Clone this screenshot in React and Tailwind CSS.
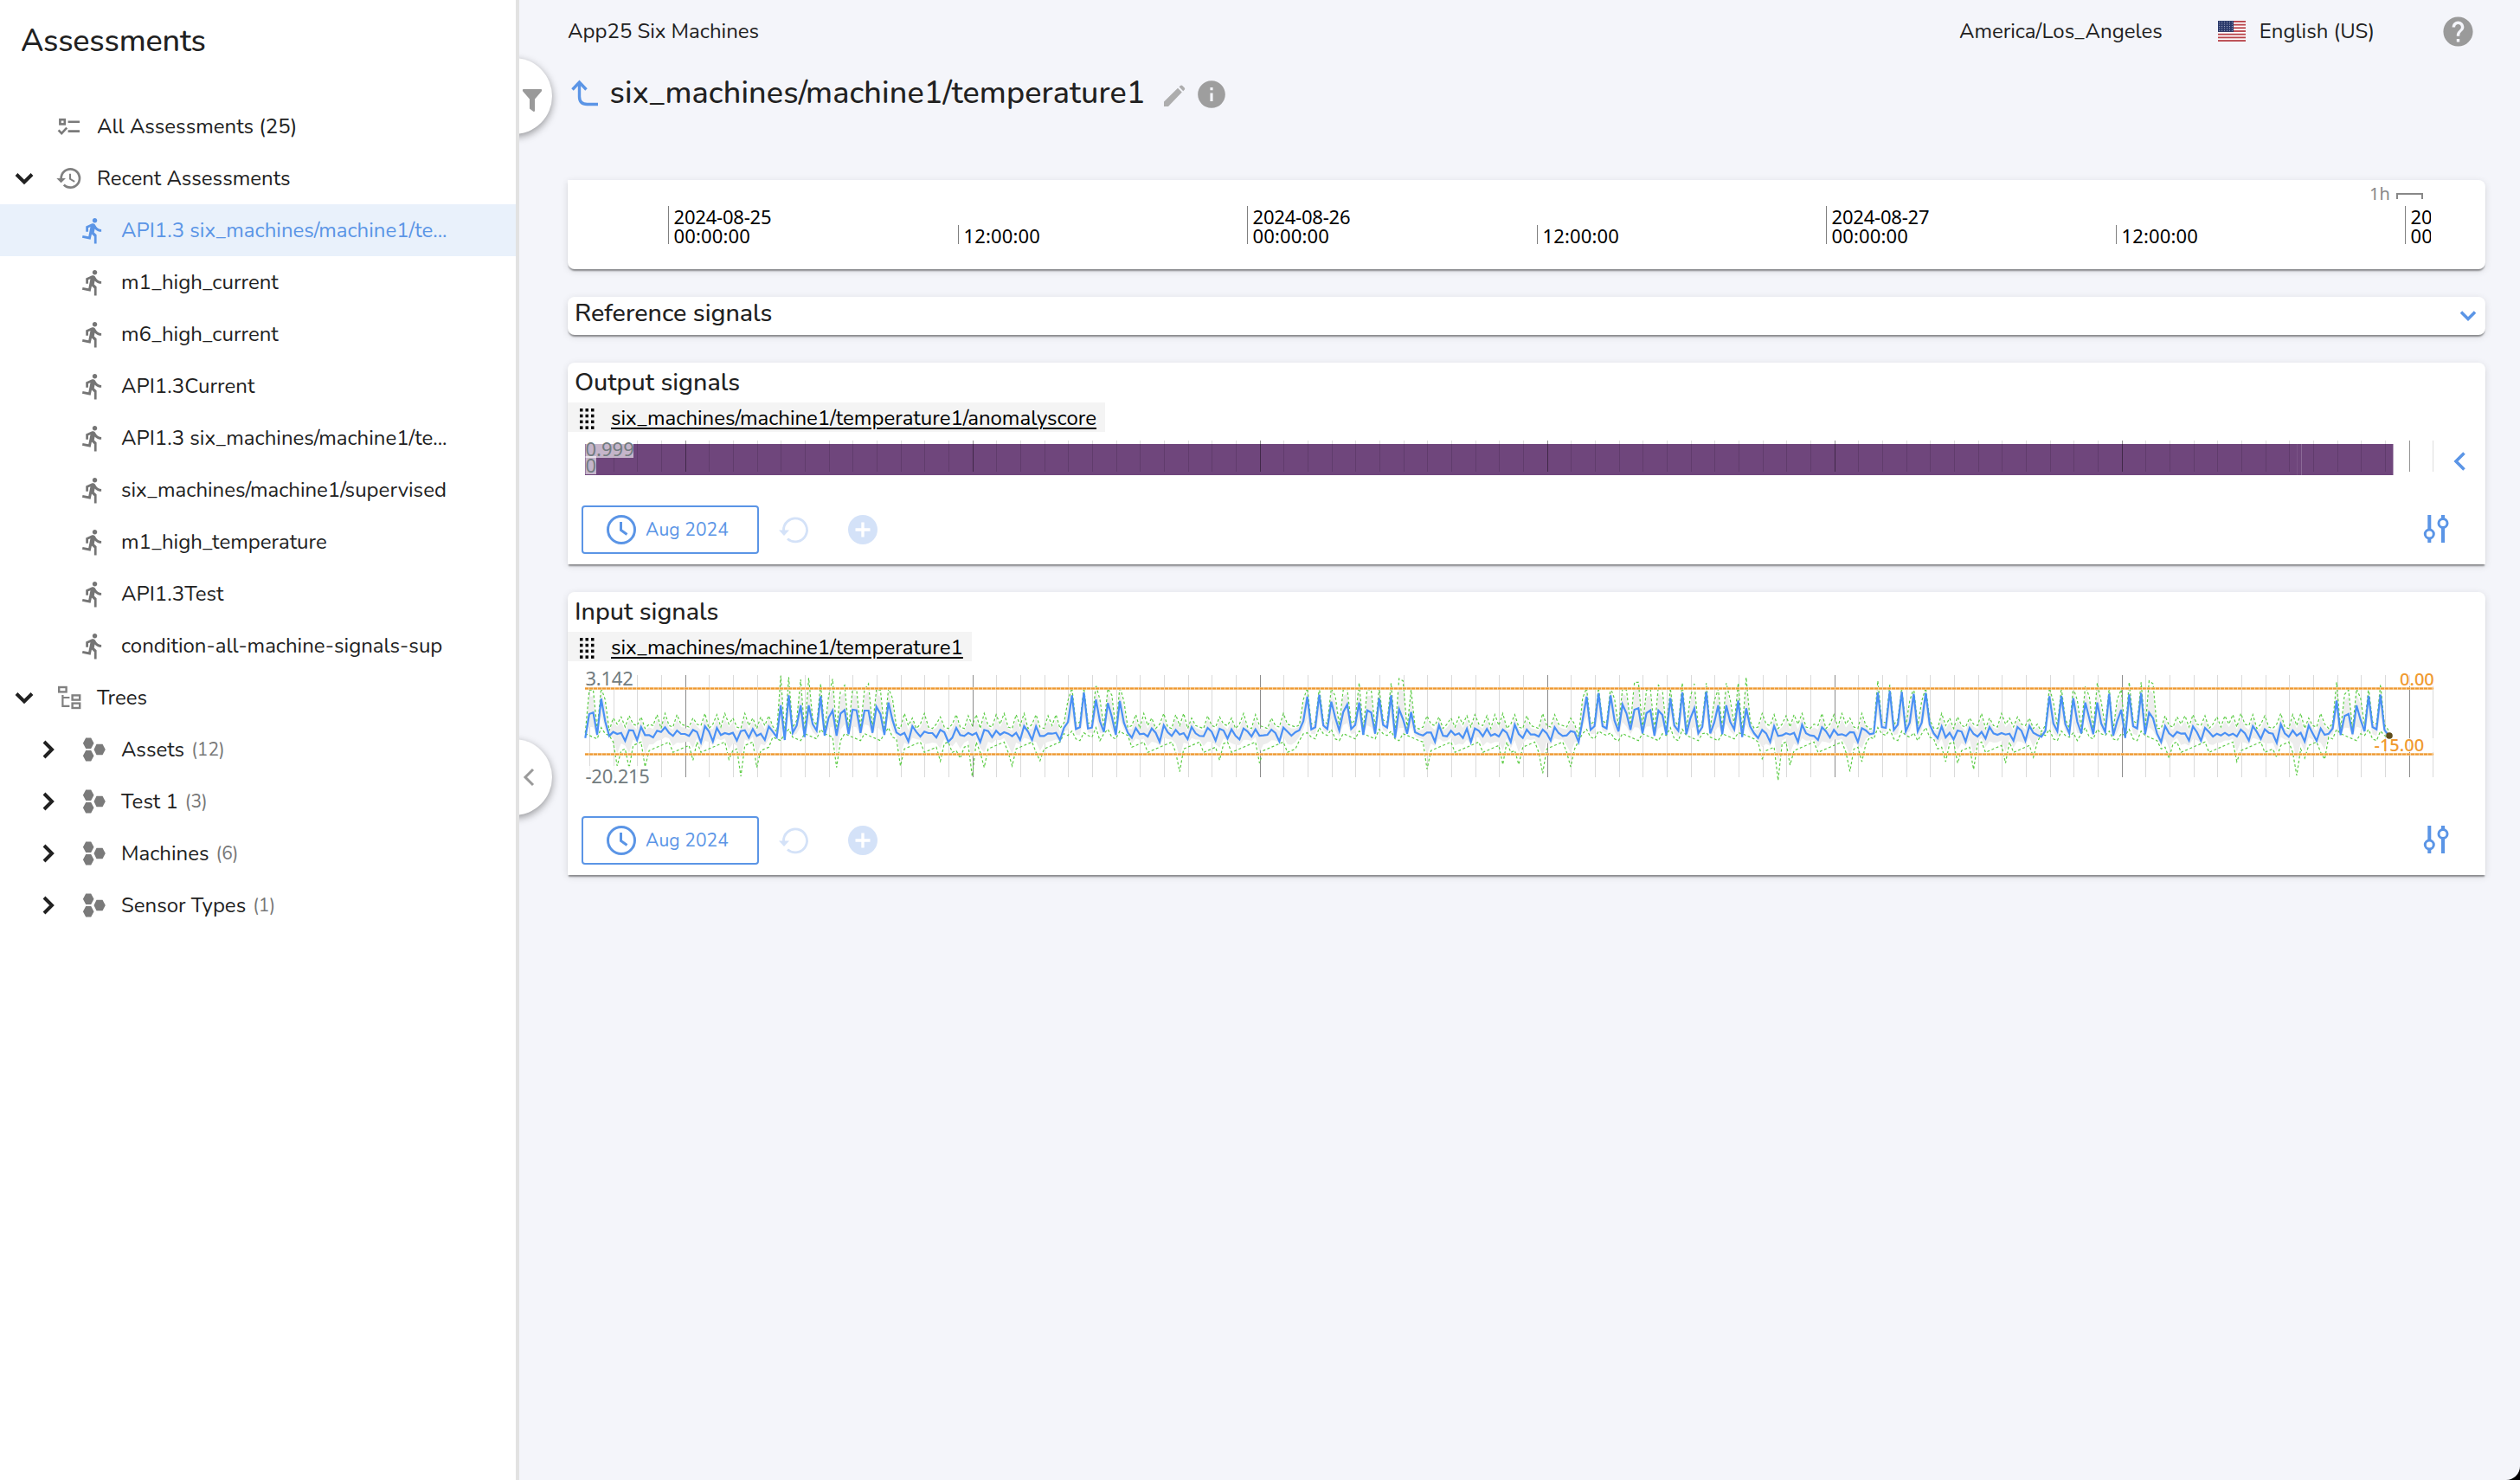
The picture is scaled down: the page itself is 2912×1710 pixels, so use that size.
import { MdDirectionsRun, MdHelp, MdHistory, MdInfo } from 'react-icons/md'

const RECENT = [
  'API1.3 six_machines/machine1/te...',
  'm1_high_current',
  'm6_high_current',
  'API1.3Current',
  'API1.3 six_machines/machine1/te...',
  'six_machines/machine1/supervised',
  'm1_high_temperature',
  'API1.3Test',
  'condition-all-machine-signals-sup',
]

const TREES = [
  { name: 'Assets', count: 12 },
  { name: 'Test 1', count: 3 },
  { name: 'Machines', count: 6 },
  { name: 'Sensor Types', count: 1 },
]

// temperature samples, one per 10 minutes, in thirds of a pixel below y = 770
const SIGNAL = [
  248, 165, 160, 237, 112, 190, 241, 227, 234, 230, 258, 221, 222, 255, 210, 238, 238, 246, 223, 227,
  211, 230, 241, 222, 234, 234, 241, 220, 227, 263, 207, 225, 260, 213, 238, 231, 235, 230, 257, 224,
  221, 247, 217, 241, 233, 255, 208, 226, 245, 135, 255, 100, 230, 205, 135, 245, 135, 200, 223, 103,
  240, 178, 153, 240, 163, 151, 235, 150, 152, 230, 153, 153, 230, 140, 165, 237, 125, 185, 229, 238,
  230, 260, 207, 227, 243, 226, 231, 231, 246, 220, 228, 261, 247, 213, 238, 241, 230, 238, 230, 262,
  220, 224, 245, 223, 237, 228, 233, 242, 230, 255, 207, 226, 255, 208, 241, 241, 232, 233, 230, 255,
  213, 193, 100, 217, 211, 90, 215, 212, 115, 190, 227, 127, 175, 237, 120, 195, 230, 247, 214, 235,
  233, 243, 215, 230, 262, 204, 228, 241, 220, 236, 231, 252, 210, 232, 241, 242, 213, 226, 257, 216,
  222, 250, 218, 240, 253, 215, 225, 243, 218, 240, 239, 237, 219, 231, 260, 212, 226, 240, 228, 221,
  190, 105, 218, 211, 98, 205, 217, 122, 178, 222, 158, 132, 217, 203, 125, 237, 152, 160, 233, 110,
  203, 212, 100, 248, 148, 183, 233, 158, 228, 235, 239, 229, 229, 261, 204, 240, 242, 223, 238, 232,
  248, 216, 262, 215, 223, 242, 217, 240, 234, 243, 219, 230, 262, 202, 234, 248, 219, 236, 236, 243,
  219, 232, 257, 211, 231, 241, 239, 224, 228, 262, 185, 105, 220, 207, 93, 207, 215, 100, 188, 225,
  132, 163, 220, 150, 145, 232, 162, 152, 240, 153, 168, 237, 110, 205, 223, 90, 235, 180, 145, 232,
  210, 88, 232, 195, 135, 235, 135, 192, 218, 118, 245, 145, 208, 232, 248, 220, 232, 262, 207, 241,
  239, 232, 236, 230, 262, 202, 232, 239, 241, 255, 211, 225, 246, 220, 237, 235, 241, 228, 229, 262,
  214, 222, 235, 232, 90, 210, 213, 85, 220, 202, 88, 225, 195, 95, 225, 195, 92, 202, 232, 249,
  208, 246, 230, 253, 222, 226, 260, 213, 234, 243, 227, 250, 210, 232, 237, 231, 236, 233, 257, 210,
  223, 257, 206, 230, 238, 244, 223, 103, 198, 225, 102, 200, 232, 110, 192, 232, 125, 180, 235, 125,
  198, 227, 95, 240, 190, 150, 248, 97, 207, 215, 92, 235, 160, 180, 233, 262, 207, 232, 243, 227,
  233, 232, 257, 208, 228, 258, 213, 227, 243, 233, 239, 230, 239, 233, 243, 219, 232, 257, 207, 227,
  251, 218, 230, 233, 265, 200, 232, 244, 222, 240, 230, 260, 205, 232, 258, 215, 237, 233, 215, 118,
  238, 172, 165, 235, 135, 185, 225, 102, 210, 218, 98, 220, 239,
]

const HIGH_SPIKES = {
  49: 32, 51: 37, 54: 45, 56: 40, 59: 60, 62: 43, 65: 65, 71: 60, 128: 65, 134: 70, 194: 57, 202: 58, 204: 42, 205: 50,
  263: 55, 264: 55, 269: 65, 275: 57, 278: 60, 281: 58, 286: 58, 289: 58, 291: 38, 324: 50, 327: 63, 376: 68, 379: 58,
  387: 55, 390: 55, 392: 50, 393: 60, 439: 55, 450: 63,
}

const LOW_SPIKES = {
  8: 345, 11: 353, 15: 348, 27: 325, 36: 322, 39: 381, 43: 350, 63: 350, 79: 345, 89: 328, 94: 318, 97: 381, 100: 350,
  107: 345, 114: 327, 149: 365, 159: 325, 169: 335, 211: 356, 230: 340, 234: 340, 240: 370, 247: 348, 295: 320, 299: 395,
  302: 342, 317: 364, 320: 330, 341: 330, 344: 335, 348: 357, 356: 335, 363: 315, 397: 318, 414: 330, 424: 315, 429: 378,
  431: 318, 436: 322,
}

const busy = i => [-2, -1, 0, 1, 2].some(d => SIGNAL[i + d] < 180)

const HIGH = SIGNAL.map((v, i) => {
  if (HIGH_SPIKES[i]) return HIGH_SPIKES[i]
  if (v < 172) return 74 + Math.max(0, v - 100) * 0.12
  const prev = SIGNAL[i - 1] ?? v
  const next = SIGNAL[i + 1] ?? v
  if (busy(i)) return v < 200 ? v - 75 : v - 18
  if (v < prev && v <= next) return 163 + ((i * 7) % 5) * 4
  return 200 + ((i * 5) % 4) * 5
})

const LOW = SIGNAL.map((v, i) => {
  if (LOW_SPIKES[i]) return LOW_SPIKES[i]
  if (busy(i)) return v < 130 ? 212 + ((i * 7) % 4) * 6 : 233 + ((i * 11) % 5) * 6
  return 262 + ((i * 13) % 7) * 6
})

const px = i => 676.3 + i * 4.61
const py = v => 770 + v / 3
const line = values => values.map((v, i) => `${px(i).toFixed(1)},${py(v).toFixed(1)}`)
const mix = (values, k) => SIGNAL.map((v, i) => v + (values[i] - v) * k)
const BAND = [...line(mix(HIGH, 0.72)), ...line(mix(LOW, 0.6)).reverse()].join(' ')

const HOURS = Array.from({ length: 78 }, (_, k) => k - 4)

function HourTicks({ y1, y2, minor, major }) {
  return HOURS.map(k => {
    const x = Math.floor(792.2 + k * 27.667) + 0.5
    return <line key={k} x1={x} x2={x} y1={y1} y2={y2} stroke={k % 12 === 0 ? major : minor} strokeWidth="1" />
  })
}

function ChevronIcon({ d, size, className }) {
  return (
    <svg viewBox="0 0 24 24" width={size} height={size} className={className} fill="none" stroke="currentColor">
      <path d={d} strokeWidth="4" />
    </svg>
  )
}

function ChecklistIcon() {
  return (
    <svg viewBox="0 0 28 28" width="28" height="28" fill="none" stroke="#7a7a7a" strokeWidth="2.6">
      <rect x="3.4" y="6.2" width="5.4" height="5.2" />
      <path d="M12.6 8.8H26M12.6 19.6H26M1.6 18.4l3.6 3.8 6-6.6" />
    </svg>
  )
}

function TreeIcon() {
  return (
    <svg viewBox="0 0 28 28" width="28" height="28" fill="none" stroke="#808080" strokeWidth="2.4">
      <rect x="2.2" y="2" width="8.4" height="5.4" />
      <rect x="17.6" y="11.4" width="8.6" height="5.2" />
      <rect x="17.6" y="20.6" width="8.6" height="5.4" />
      <path d="M6.4 11v12.800h8M6.4 14h8" strokeWidth="2.2" />
    </svg>
  )
}

function HexIcon() {
  return (
    <svg viewBox="0 0 28 28" width="28" height="28" fill="#7a7a7a">
      <path d="M4.2 .6h6l3.300 6.200-3.300 6.200h-6l-3.300-6.200zM4.200 15h6l3.300 6.200-3.300 6.200h-6l-3.300-6.200zM16.500 7.800h7l3.300 6.200-3.300 6.200h-7l-3-6.200z" />
    </svg>
  )
}

function Sidebar() {
  return (
    <aside className="w-[600px] shrink-0 bg-white border-r-4 border-[#e2e2e2]">
      <h1 className="h-24 mb-5 pl-6 text-[36px] leading-[96px] font-medium tracking-[-0.2px]">Assessments</h1>
      <div className="h-[60px] flex items-center pl-[66px]">
        <ChecklistIcon />
        <span className="ml-[18px]">All Assessments (25)</span>
      </div>
      <div className="h-[60px] flex items-center pl-4">
        <ChevronIcon d="M3 7.500l9 9 9-9" size={24} />
        <MdHistory size={32} className="ml-6 text-[#808080]" />
        <span className="ml-4">Recent Assessments</span>
      </div>
      {RECENT.map((name, i) => (
        <div
          key={i}
          className={`h-[60px] flex items-center pl-[91px] ${i === 0 ? 'bg-[#e9f1fb] text-[#5b95e6]' : ''}`}
        >
          <MdDirectionsRun size={33} className={i === 0 ? '' : 'text-[#757575]'} />
          <span className="ml-4">{name}</span>
        </div>
      ))}
      <div className="h-[60px] flex items-center pl-4">
        <ChevronIcon d="M3 7.500l9 9 9-9" size={24} />
        <span className="ml-[26px]"><TreeIcon /></span>
        <span className="ml-[18px]">Trees</span>
      </div>
      {TREES.map(tree => (
        <div key={tree.name} className="h-[60px] flex items-center pl-[43px]">
          <ChevronIcon d="M8 3l9 9-9 9" size={24} />
          <span className="ml-7"><HexIcon /></span>
          <span className="ml-[17px]">{tree.name}</span>
          <span className="ml-2 text-[21px] text-[#777]">({tree.count})</span>
        </div>
      ))}
    </aside>
  )
}

function FlagIcon() {
  return (
    <svg viewBox="0 0 32 24" width="32" height="24">
      <rect width="32" height="24" fill="#fff" />
      {[0, 1, 2, 3, 4, 5, 6].map(i => (
        <rect key={i} y={i * 3.69} width="32" height="1.85" fill="#b8434a" />
      ))}
      <rect width="18" height="12.9" fill="#2b3a6b" />
      {Array.from({ length: 30 }, (_, i) => (
        <circle key={i} cx={1.8 + (i % 6) * 2.9} cy={1.6 + Math.floor(i / 6) * 2.4} r="0.5" fill="#c9cfe2" />
      ))}
    </svg>
  )
}

function TopBar() {
  return (
    <header className="h-[72px] flex items-center">
      <span>App25 Six Machines</span>
      <span className="ml-auto">America/Los_Angeles</span>
      <span className="ml-16"><FlagIcon /></span>
      <span className="ml-4">English (US)</span>
      <MdHelp size={41} className="ml-[76px] mr-[11px] text-[#9a9a9a]" />
    </header>
  )
}

function TitleBar() {
  return (
    <div className="h-[70px] mb-[66px] flex items-center">
      <svg viewBox="0 0 36 36" width="36" height="36" className="ml-1 mt-0.5" fill="none" stroke="#5b95e6" strokeWidth="3.4">
        <path d="M1.500 13.500L9.500 5l8 8.500M9.500 5.500V21.500q0 9 9 9H31" />
      </svg>
      <h2 className="ml-[8.5px] mt-0.5 text-[36px] font-medium tracking-[0.12px]">six_machines/machine1/temperature1</h2>
      <svg viewBox="0 0 26 26" width="26" height="26" className="ml-5 mt-2" fill="#adadad">
        <path d="M1 25v-5.500L17 3.700l4.800 4.800L6 25zM18.500 2.300L20.400.8q1-.6 1.900.2l2.500 2.600q.8 1 .1 1.900l-1.700 1.700z" />
      </svg>
      <MdInfo size={38} className="ml-[11px] mt-[3px] text-[#9e9e9e]" />
    </div>
  )
}

function Card({ className, children }) {
  return (
    <section className={`bg-white shadow-[0_3px_2px_-1px_rgba(0,0,0,0.4),0_2px_8px_0_rgba(0,0,0,0.12)] ${className}`}>
      {children}
    </section>
  )
}

function Timeline() {
  const marks = [
    { x: 772.5, day: '2024-08-25' },
    { x: 1107.5 },
    { x: 1441.5, day: '2024-08-26' },
    { x: 1776.5 },
    { x: 2110.5, day: '2024-08-27' },
    { x: 2445.5 },
    { x: 2779.5, day: '2024-08-28' },
  ]
  return (
    <Card className="h-[103px] rounded-lg rounded-tl-none">
      <svg viewBox="656 208 2152.500 103" width="2152.500" height="103" className="overflow-hidden font-['Noto_Sans',sans-serif] text-[22px]">
        {marks.map(m => (
          <g key={m.x}>
            <line x1={m.x} x2={m.x} y1={m.day ? 238 : 260} y2="282" stroke="#808080" strokeWidth="1" />
            {m.day && <text x={m.x + 6} y="259" letterSpacing="-0.2">{m.day}</text>}
            <text x={m.x + 6} y="281" letterSpacing="0.150">{m.day ? '00:00:00' : '12:00:00'}</text>
          </g>
        ))}
        <text x="2738" y="231" className="text-[20px] fill-[#888]">1h</text>
        <path d="M2770 230v-6h29v6" fill="none" stroke="#888" strokeWidth="2" />
      </svg>
    </Card>
  )
}

function SignalName({ children }) {
  return (
    <div className="w-fit h-[34px] bg-[#f4f4f4] flex items-center pl-[13px] pr-[10px] text-black">
      <svg viewBox="0 0 18 26" width="18" height="26" className="mt-1">
        {Array.from({ length: 12 }, (_, i) => (
          <rect key={i} x={1 + (i % 3) * 6.500} y={1 + Math.floor(i / 3) * 6.800} width="3.500" height="3.500" />
        ))}
      </svg>
      <span className="ml-[19px] mt-[3px] underline decoration-2 underline-offset-[3px]">{children}</span>
    </div>
  )
}

function Toolbar() {
  return (
    <div className="h-14 flex items-center pl-4 pr-[42px] text-[#5b95e6]">
      <button className="w-[205px] h-14 border-2 border-[#5b95e6] rounded flex items-center pl-[25px] text-[21px] tracking-[0.1px]">
        <svg viewBox="0 0 38 38" width="38" height="38" fill="none" stroke="currentColor" strokeWidth="3">
          <circle cx="19" cy="19" r="15.500" />
          <path d="M18.500 10v9.500l7 5" />
        </svg>
        <span className="ml-[9px]">Aug 2024</span>
      </button>
      <svg viewBox="0 0 38 38" width="38" height="38" className="ml-[21px] text-[#d4e2f8]" fill="none" stroke="currentColor" strokeWidth="2.800">
        <path d="M7.500 20a13.500 13.500 0 1 1 4.500 9.500" />
        <path d="M2 19.500h12l-6 6.500z" fill="currentColor" stroke="none" />
      </svg>
      <svg viewBox="0 0 38 38" width="38" height="38" className="ml-[42px]">
        <circle cx="19" cy="19" r="17" fill="#d4e2f8" />
        <path d="M19 10.500v17M10.500 19h17" stroke="#fff" strokeWidth="3.400" />
      </svg>
      <svg viewBox="0 0 30 34" width="30" height="34" className="ml-auto -mt-0.5" fill="none" stroke="currentColor" strokeWidth="3">
        <path d="M7.300 1v17M7.300 28v5M23 1v5M23 15v18" strokeWidth="4" />
        <circle cx="7.300" cy="23" r="5" />
        <circle cx="23" cy="10.500" r="5" />
      </svg>
    </div>
  )
}

function SectionTitle({ children }) {
  return <h3 className="pl-2 pt-0.5 text-[28.700px] font-medium">{children}</h3>
}

function ScoreChart() {
  return (
    <svg viewBox="656 499 2160 85" width="2160" height="85" className="font-['Noto_Sans',sans-serif] text-[22px]">
      <rect x="676" y="513" width="2089.500" height="36" fill="#6f467c" />
      <rect x="2659" y="513" width="1" height="36" fill="#8b6a97" />
      <rect x="2654" y="513" width="1" height="36" fill="#7a5386" />
      <HourTicks y1={509} y2={545} minor="rgba(0,0,0,0.13)" major="rgba(0,0,0,0.42)" />
      <rect x="676.500" y="509" width="55.500" height="20" fill="#fff" opacity="0.6" />
      <rect x="676.500" y="527" width="12.500" height="21" fill="#fff" opacity="0.6" />
      <text x="676.500" y="527" fill="#727c80">0.999</text>
      <text x="676.500" y="546" fill="#727c80">0</text>
    </svg>
  )
}

function TemperatureChart() {
  return (
    <svg viewBox="656 764 2160 179" width="2160" height="179" className="font-['Noto_Sans',sans-serif] text-[22px]">
      <HourTicks y1={780} y2={898} minor="#dadada" major="#8c8c8c" />
      <polygon points={BAND} fill="#ededed" />
      <g fill="none">
        <polyline points={line(HIGH).join(' ')} stroke="#5ccc45" strokeWidth="1.200" strokeDasharray="3 2.500" />
        <polyline points={line(LOW).join(' ')} stroke="#5ccc45" strokeWidth="1.200" strokeDasharray="3 2.500" />
        <polyline points={line(SIGNAL).join(' ')} stroke="#4a90f5" strokeWidth="2.200" />
      </g>
      {[795.5, 871.5].map(y => (
        <g key={y}>
          <line x1="676" x2="2812" y1={y} y2={y} stroke="#f9d6a8" strokeWidth="3" />
          <line x1="676" x2="2812" y1={y} y2={y} stroke="#ee9830" strokeWidth="2" strokeDasharray="4 1" />
        </g>
      ))}
      <circle cx="2761" cy="850" r="3.800" fill="#5f4d1c" />
      <g fill="#fff" opacity="0.8">
        <rect x="677" y="776" width="56" height="18" />
        <rect x="677" y="885" width="75" height="20" />
        <rect x="2774" y="776" width="38" height="17" />
        <rect x="2765" y="853" width="47" height="16" />
      </g>
      <g fill="#727c80" letterSpacing="-0.25">
        <text x="676.500" y="792">3.142</text>
        <text x="676.500" y="905">-20.215</text>
      </g>
      <g fill="#f09a30" className="text-[20px] font-medium">
        <text x="2773" y="792">0.00</text>
        <text x="2743.500" y="868">-15.00</text>
      </g>
    </svg>
  )
}

function DrawerHandle({ className, children }) {
  return (
    <div className={`absolute left-[-50px] w-[88px] h-[88px] rounded-full bg-white shadow-[0_3px_10px_rgba(0,0,0,0.4)] flex items-center text-[#9a9a9a] ${className}`}>
      {children}
    </div>
  )
}

export default function App() {
  return (
    <div className="bg-black w-[2912px] h-[1710px]">
      <div className="flex h-full bg-[#f4f5fa] rounded-br-[16px] overflow-hidden font-['Nunito','Open_Sans',sans-serif] text-[24px] leading-[1.364] text-[#212121]">
        <Sidebar />
        <main className="flex-1 relative pl-14 pr-10 overflow-hidden">
          <DrawerHandle className="top-[67px]">
            <svg viewBox="0 0 24 28" width="24" height="28" className="ml-[53px] mt-2.5" fill="currentColor">
              <path d="M1.500 1h21q1.200 1 .3 2.400L15 12.500V26.500L13.500 27 9 23.500v-11L1.200 3.400Q.3 2 1.500 1z" />
            </svg>
          </DrawerHandle>
          <DrawerHandle className="top-[854px]">
            <svg viewBox="0 0 14 22" width="14" height="22" className="ml-[54px]" fill="none" stroke="currentColor" strokeWidth="3">
              <path d="M12 2L3 11l9 9" />
            </svg>
          </DrawerHandle>
          <TopBar />
          <TitleBar />
          <div className="flex flex-col gap-8">
            <Timeline />
            <Card className="h-11 rounded-lg flex items-start justify-between pr-[11px]">
              <div className="h-[35px] flex items-center">
                <SectionTitle>Reference signals</SectionTitle>
              </div>
              <svg viewBox="0 0 18 12" width="18" height="12" className="mt-4" fill="none" stroke="#5b95e6" strokeWidth="3.400">
                <path d="M1 1.500l8 8 8-8" />
              </svg>
            </Card>
            <Card className="h-[233px] rounded-t-lg">
              <div className="h-[43px] mb-[3px] flex items-center">
                <SectionTitle>Output signals</SectionTitle>
              </div>
              <SignalName>six_machines/machine1/temperature1/anomalyscore</SignalName>
              <div className="flex">
                <ScoreChart />
                <svg viewBox="0 0 14 22" width="14" height="22" className="ml-[19px] mt-[23px]" fill="none" stroke="#5b95e6" strokeWidth="3.600">
                  <path d="M12.500 1.500L3 11l9.500 9.500" />
                </svg>
              </div>
              <Toolbar />
            </Card>
            <Card className="h-[327px] rounded-t-lg">
              <div className="h-[43px] mb-[3px] flex items-center">
                <SectionTitle>Input signals</SectionTitle>
              </div>
              <SignalName>six_machines/machine1/temperature1</SignalName>
              <TemperatureChart />
              <Toolbar />
            </Card>
          </div>
        </main>
      </div>
    </div>
  )
}
